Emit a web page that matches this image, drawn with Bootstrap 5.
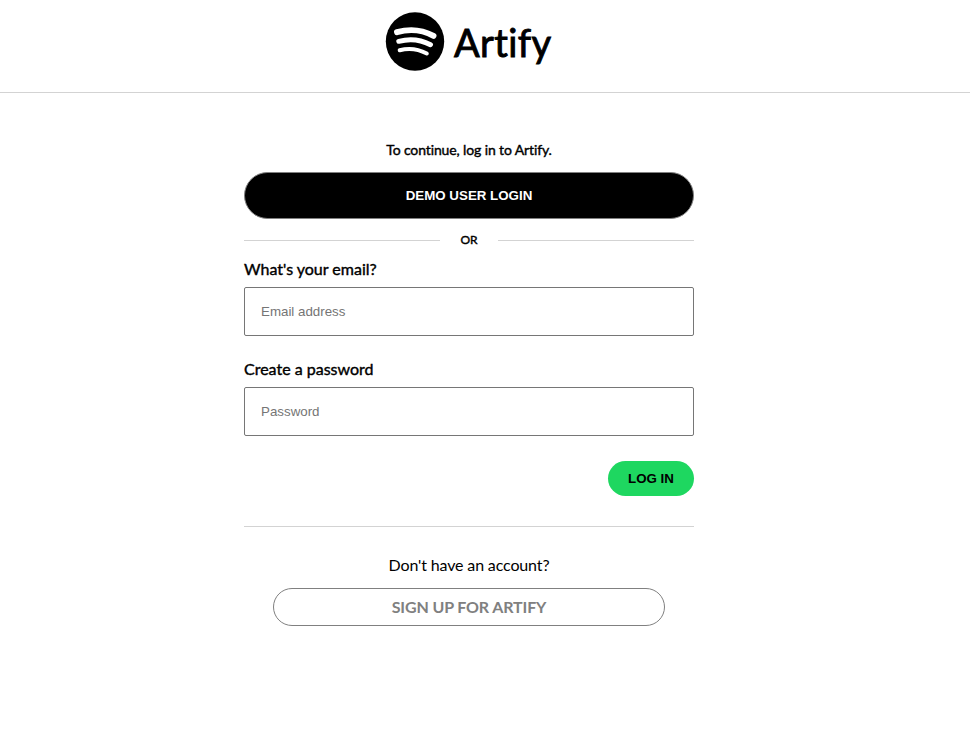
<!DOCTYPE html>
<html lang="en">
<head>
<meta charset="utf-8">
<meta name="viewport" content="width=device-width, initial-scale=1">
<title>Artify - Log in</title>
<link rel="stylesheet" href="https://cdn.jsdelivr.net/npm/bootstrap@5.3.0/dist/css/bootstrap.min.css">
<style>
body{font-family:Lato,sans-serif;color:#000;background:#fff;line-height:1.2;font-variant-ligatures:none}
.site-header{height:93px;border-bottom:1px solid #d3d3d3;padding:12px 32px 0 0}
.brand-icon{width:60px;height:60px}
.brand-name{font-size:38px;line-height:48px;-webkit-text-stroke:.9px #000;margin:6px 0 0 9px;width:99px;letter-spacing:.4px}
.login-panel{width:450px;margin:48px 0 0 244px}
.semi{-webkit-text-stroke:.4px currentColor}
.intro{font-size:14px;line-height:17px;margin-bottom:14px;letter-spacing:-.12px}
.demo-btn{height:47px;border:1px solid #808080;background:#000;color:#fff;border-radius:24px;font:700 13.33px "Liberation Sans",sans-serif}
.divider{font-size:12px;line-height:14px;margin:14px 0 12px;gap:20px}
.divider::before,.divider::after{content:"";flex:1;height:1px;background:#d3d3d3}
.field-label{font-size:16px;line-height:19px;margin-bottom:9px;display:block}
.field-input{height:49px;border:1px solid #767676;border-radius:2px;padding:0 16px;font:13.33px "Liberation Sans",sans-serif;margin-bottom:23px}
.field-input::placeholder{color:#757575}
.login-btn{width:86px;height:35px;border:0;border-radius:18px;background:#1ed760;color:#000;font:700 13.33px "Liberation Sans",sans-serif;margin-top:2px}
.rule{height:1px;background:#d3d3d3;margin:30px 0 28px}
.ask{font-size:16px;line-height:19px;margin-bottom:14px;letter-spacing:-.14px}
.signup-btn{width:392px;height:38px;border:1px solid #808080;border-radius:19px;color:#808080;background:#fff;font:700 16px Lato,sans-serif;letter-spacing:-.13px;padding:0 0 2px}
</style>
<script src="https://cdn.jsdelivr.net/npm/bootstrap@5.3.0/dist/js/bootstrap.bundle.min.js"></script>
</head>
<body>
<header class="site-header d-flex justify-content-center align-items-start">
<svg class="brand-icon" viewBox="0 0 60 60" aria-hidden="true"><circle cx="30" cy="29.5" r="29.2"/><g fill="none" stroke="#fff" stroke-linecap="round"><path d="M12 20.200C25 16.500 38 18.200 48.500 23.800" stroke-width="5.900"/><path d="M13.800 29.300C25 26.200 36 27.700 45.500 32.700" stroke-width="5"/><path d="M14.700 38.300C24 35.800 33 36.900 41.800 41.500" stroke-width="4"/></g></svg>
<span class="brand-name">Artify</span>
</header>
<main class="login-panel">
<p class="intro semi text-center">To continue, log in to Artify.</p>
<button class="demo-btn w-100 d-block">DEMO USER LOGIN</button>
<div class="divider semi d-flex align-items-center">OR</div>
<form>
<label class="field-label semi" for="email">What's your email?</label>
<input class="field-input w-100 d-block" id="email" type="email" placeholder="Email address">
<label class="field-label semi" for="password">Create a password</label>
<input class="field-input w-100 d-block" id="password" type="password" placeholder="Password">
<div class="d-flex justify-content-end"><button type="button" class="login-btn">LOG IN</button></div>
</form>
<div class="rule"></div>
<p class="ask text-center">Don't have an account?</p>
<button class="signup-btn d-block mx-auto">SIGN UP FOR ARTIFY</button>
</main>
</body>
</html>
